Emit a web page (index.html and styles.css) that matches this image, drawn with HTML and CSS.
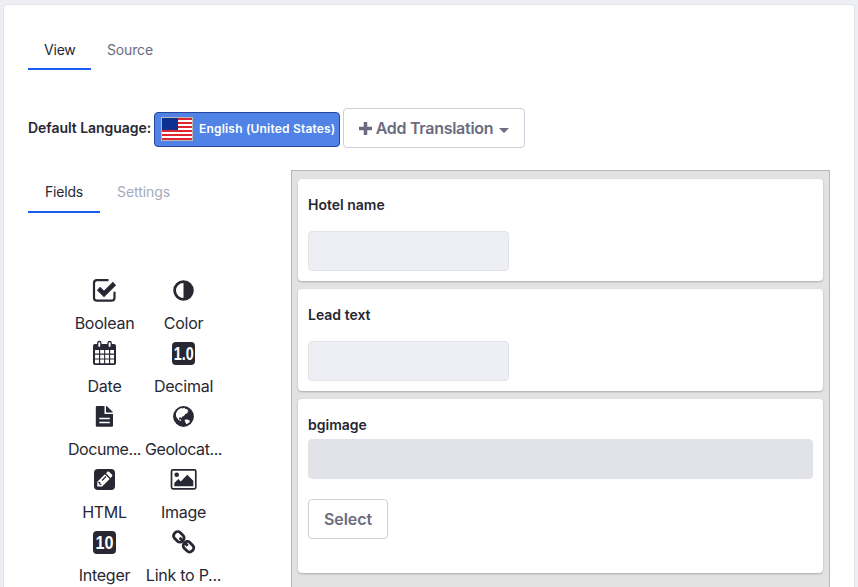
FILE: index.html
```html
<!DOCTYPE html>
<html lang="en">
<head>
<meta charset="utf-8">
<title>Structure editor</title>
<link rel="stylesheet" href="styles.css">
</head>
<body>
<main class="sheet">
  <nav class="tabs main-tabs"><a class="tab active">View</a><a class="tab source">Source</a></nav>
  <div class="languages">
    <span class="language-label">Default Language:</span>
    <span class="language-current">
      <svg class="flag" width="32" height="24" viewBox="0 0 32 24"><path fill="#bbb9b8" d="M0 0h32v24H0z"/><path fill="#fff" d="M1 1h30v22H1z"/><path stroke="#df2531" stroke-width="2" d="M1 2h30M1 6h30M1 10h30M1 14h30M1 18h30M1 22h30"/><path fill="#0c3190" d="M1 1h16v12H1z"/></svg>
      <span class="language-name">English (United States)</span>
    </span>
    <button class="btn add"><svg width="13" height="13" viewBox="0 0 13 13"><path fill="currentColor" d="M4.750 0h3.500v4.750H13v3.500H8.250V13h-3.500V8.250H0v-3.500h4.750z"/></svg><span class="add-text">Add Translation</span><svg class="caret" width="10" height="5" viewBox="0 0 10 5"><path fill="currentColor" d="M0 0h10L5 5z"/></svg></button>
  </div>
  <div class="builder">
    <aside class="palette">
      <nav class="tabs side-tabs"><a class="tab active">Fields</a><a class="tab muted">Settings</a></nav>
      <div class="fields">
        <div class="field"><svg class="icon" viewBox="0 0 28 28"><path fill="none" stroke="currentColor" stroke-width="2.200" d="M18.500 4.200H7a3 3 0 0 0-3 3v14.500a3 3 0 0 0 3 3h14.500a3 3 0 0 0 3-3v-6"/><path fill="none" stroke="currentColor" stroke-width="4.600" d="m8.500 12.500 5.500 5.500L24.500 7.500"/></svg><span class="name boolean">Boolean</span></div>
        <div class="field"><svg class="icon" viewBox="0 0 28 28"><circle cx="14.500" cy="14.500" r="8.900" fill="none" stroke="currentColor" stroke-width="2.800"/><path fill="currentColor" d="M14.500 6a8.500 8.500 0 0 1 0 17z"/></svg><span class="name color">Color</span></div>
        <div class="field"><svg class="icon" viewBox="0 0 28 28"><rect x="3" y="5" width="23" height="21" rx="2" fill="currentColor"/><path fill="#fff" d="M5 11h4v3.600H5zM10.200 11h3.900v3.600h-3.900zM15.200 11H19v3.600h-3.800zM20.200 11H24v3.600h-3.800zM5 15.800h4v3.600H5zM10.200 15.800h3.900v3.600h-3.900zM15.200 15.800H19v3.600h-3.800zM20.200 15.800H24v3.600h-3.800zM5 20.600h4v3.600H5zM10.200 20.600h3.900v3.600h-3.900zM15.200 20.600H19v3.600h-3.800zM20.200 20.600H24v3.600h-3.800z"/><rect x="7.700" y="2.500" width="3.200" height="6" rx="1.500" fill="#fff" stroke="currentColor" stroke-width="1.300"/><rect x="18" y="2.500" width="3.200" height="6" rx="1.500" fill="#fff" stroke="currentColor" stroke-width="1.300"/></svg><span class="name date">Date</span></div>
        <div class="field"><svg class="icon" viewBox="0 0 28 28"><rect x="3" y="3" width="23" height="23" rx="4" fill="currentColor"/><text class="digits" x="4.800" y="21" textLength="20" lengthAdjust="spacingAndGlyphs">1.0</text></svg><span class="name decimal">Decimal</span></div>
        <div class="field"><svg class="icon" viewBox="0 0 28 28"><path fill="currentColor" d="M7 4h7.500v8h8.500v11.500a1.200 1.200 0 0 1-1.200 1.200H7a1.200 1.200 0 0 1-1.200-1.200V5.200A1.200 1.200 0 0 1 7 4zm9 0 1.300.5 5.200 5.200.5.900h-7z"/><path stroke="#fff" stroke-width="1.400" d="M9.300 16.500h10.500M9.300 20.500h10.500"/></svg><span class="name document">Docume...</span></div>
        <div class="field"><svg class="icon" viewBox="0 0 28 28"><circle cx="14.500" cy="14.500" r="10.400" fill="currentColor"/><path fill="#fff" d="m8.900 8 3.200-2 1.600.5 1.600-.8 1.200 1.200 2.200.5.800 2-1.400.2.800 1.500-2.600 1-1.300 1.800-1.700.6-.5 1.500-1.400-.8-1.500.9.300 1.400 1.700.1.400 1.600-3-1.400-2.200-3.300-.2-3.300zM15.500 18l2.200-.8 3.400 1.500-1 2-2.800 1.600-.9-2z"/></svg><span class="name geo">Geolocat...</span></div>
        <div class="field"><svg class="icon" viewBox="0 0 28 28"><rect x="4" y="4" width="21" height="21" rx="4" fill="currentColor"/><path fill="#fff" d="M7.300 21.500v-4.700l7.600-7.600 4.800 4.800-7.600 7.500zM16 8.200l1.300-1.300c.6-.5 1.300-.5 1.900 0l2.700 2.700c.6.600.6 1.300 0 1.900L20.600 13z"/><path fill="none" stroke="currentColor" stroke-width="1.200" d="m8.200 17.300 1.500.3.200 1.700 1.600.2M12 15.500l4-4"/></svg><span class="name html">HTML</span></div>
        <div class="field"><svg class="icon" viewBox="0 0 28 28"><rect x="2.500" y="4.800" width="24.300" height="19" rx="1.500" fill="none" stroke="currentColor" stroke-width="1.700"/><circle cx="7.700" cy="9.700" r="2.300" fill="currentColor"/><path fill="currentColor" d="M5.300 21.300v-3.200l4-4 2.500 2.300 6.500-6.700 6 6v5.600z"/></svg><span class="name image">Image</span></div>
        <div class="field"><svg class="icon" viewBox="0 0 28 28"><rect x="3" y="3" width="23" height="23" rx="4" fill="currentColor"/><text class="digits" x="5.500" y="21" textLength="18" lengthAdjust="spacingAndGlyphs">10</text></svg><span class="name integer">Integer</span></div>
        <div class="field"><svg class="icon" viewBox="0 0 28 28"><g fill="none" stroke="currentColor" stroke-width="2.800"><rect x="4.300" y="4.900" width="11" height="8" rx="3.400" transform="rotate(45 9.800 8.900)"/><rect x="14" y="14.800" width="11" height="8" rx="3.400" transform="rotate(45 19.500 18.800)"/><path d="m10.700 9.800 3.500 3.500m1 1 3.500 3.500"/></g></svg><span class="name link">Link to P...</span></div>
      </div>
    </aside>
    <section class="canvas">
      <article class="card"><h2 class="hotel">Hotel name</h2><div class="input"></div></article>
      <article class="card"><h2 class="lead">Lead text</h2><div class="input"></div></article>
      <article class="card image-card"><h2 class="bgimage">bgimage</h2><div class="input full"></div><button class="btn select"><span>Select</span></button></article>
    </section>
  </div>
</main>
</body>
</html>
```
FILE: styles.css
```css
* { box-sizing: border-box; }
body { margin: 0; padding: 4px 3px 0; height: 587px; overflow: hidden; background: #eeeff4; color: #272833; font: 14px/21px Inter, "Liberation Sans", sans-serif; }
.sheet { height: 583px; overflow: hidden; width: 852px; padding: 25px 24px 0; background: #fff; border: 1px solid #e2e3ea; border-bottom: 0; border-radius: 4px 4px 0 0; }
.tabs { display: flex; }
.tab { padding: 9px 16px 8px; height: 40px; border-bottom: 2px solid transparent; }
.active { border-color: #1b5df0; }
.main-tabs .active { width: 63px; letter-spacing: -.2px; }
.source { color: #6b6c7e; letter-spacing: -.15px; }
.languages { display: flex; align-items: center; height: 40px; margin-top: 38px; }
.language-label { width: 126px; padding-bottom: 2px; font-weight: 600; white-space: nowrap; letter-spacing: -.05px; }
.language-current { display: flex; align-items: center; width: 186px; height: 35px; margin-top: 3px; padding: 0 5px 0 6px; border: 1px solid #24479c; border-radius: 4px; background: #5083e5; color: #fff; }
.flag { flex: none; margin: -1px 6px 0 0; }
.language-name { font-size: 12px; font-weight: 600; white-space: nowrap; letter-spacing: .19px; margin-top: -2px; }
.btn { display: flex; align-items: center; justify-content: center; padding: 0; border: 1px solid #cdced9; border-radius: 4px; background: #fff; color: #6b6c7e; font: 600 16px/24px Inter, "Liberation Sans", sans-serif; height: 40px; }
.add { width: 182px; margin-left: 3px; }
.add-text { margin: 0 6px 0 4px; letter-spacing: -.28px; white-space: nowrap; }
.caret { margin-top: 5px; }
.builder { display: flex; margin-top: 22px; }
.palette { width: 263px; }
.side-tabs .tab { height: 43px; padding-top: 11px; }
.side-tabs .active { width: 72px; padding-left: 17px; letter-spacing: -.2px; }
.side-tabs .muted { padding-left: 17px; color: #a7a9bc; letter-spacing: -.05px; }
.fields { display: grid; grid-template-columns: repeat(2, 79px); grid-auto-rows: 63px; width: 158px; margin: 63px 0 0 37px; }
.field { display: flex; flex-direction: column; align-items: center; white-space: nowrap; }
.icon { width: 28px; height: 28px; flex: none; margin-right: 2px; overflow: visible; }
.name { margin-top: 7px; font-size: 16px; line-height: 24px; letter-spacing: -.25px; }
.document, .geo { letter-spacing: -.42px; }
.digits { fill: #fff; font: bold 18px/20px "Liberation Sans", sans-serif; }
.canvas { flex: none; width: 539px; height: 450px; margin-left: 1px; padding: 8px 6px; border: 1px solid #b8b8b8; background: #e2e2e2; }
.card { height: 102px; width: 525px; margin-bottom: 8px; padding: 15px 10px; background: #fff; border-radius: 4px; box-shadow: 0 1px 2px rgba(0, 0, 0, .25); }
.card h2 { margin: 0; font-size: 14px; line-height: 22px; font-weight: 600; letter-spacing: 0; }
.input { width: 201px; height: 40px; margin-top: 15px; border: 1px solid #e2e3ea; border-radius: 4px; background: #eeeff4; }
.image-card { height: 174px; }
.full { width: 505px; margin-top: 3px; background: #e2e3e9; }
.select { width: 80px; margin-top: 20px; letter-spacing: -.1px; }
```
